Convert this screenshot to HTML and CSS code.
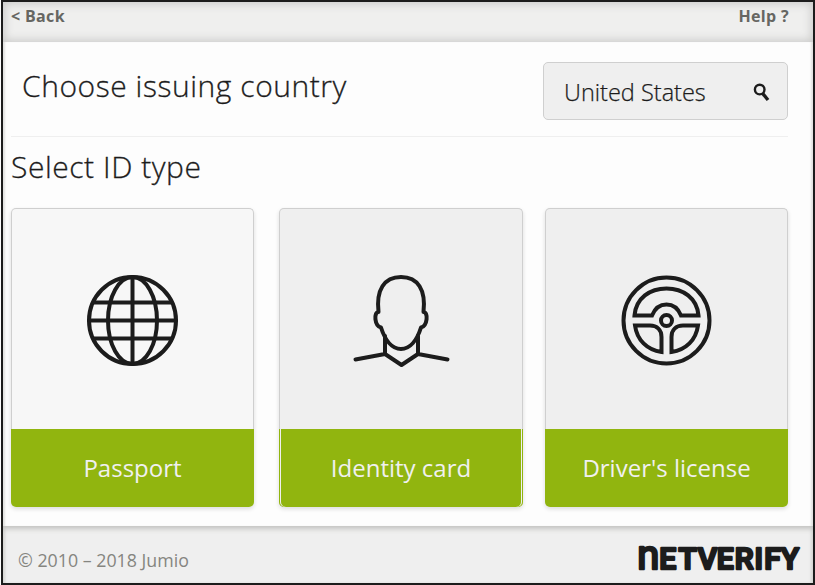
FILE: index.html
```html
<!DOCTYPE html>
<html lang="en">
<head>
<meta charset="utf-8">
<title>Netverify</title>
<link rel="stylesheet" href="styles.css">
</head>
<body>
<div class="window">
  <header class="topbar">
    <a class="back">&lt; Back</a>
    <a class="help">Help ?</a>
  </header>
  <main class="content">
    <section class="country">
      <h1 class="title">Choose issuing country</h1>
      <div class="select">
        <span class="select-value">United States</span>
        <svg class="search" viewBox="0 0 18 19" width="18" height="19">
          <circle cx="6.7" cy="6.6" r="4.8"/>
          <path d="M9.8 10.6 L15 17"/>
        </svg>
      </div>
    </section>
    <h2 class="subtitle">Select ID type</h2>
    <section class="cards">
      <div class="card card-light">
        <div class="picture">
          <svg class="icon" viewBox="0 0 126 120" width="126" height="120">
            <circle cx="62.5" cy="60.5" r="43.5"/>
            <ellipse cx="62.5" cy="60.5" rx="24.5" ry="43.5"/>
            <path d="M62.5 17V104M19 60.5H106M23.5 42.5H101.5M23.5 78.5H101.5"/>
          </svg>
        </div>
        <div class="label">Passport</div>
      </div>
      <div class="card">
        <div class="picture">
          <svg class="icon" viewBox="0 0 122 120" width="122" height="120">
            <path d="M38.5 52C36 30 44 17 61 17S86 30 83.5 52C88.5 52 87.5 66 81 67.5C77 80 70 89 61 89S45 80 41 67.5C34.5 66 33.5 52 38.5 52"/>
            <path d="M15.5 99.500L45 94L61.500 105L78 94L107.500 99.500M45 94V76M78 94V76"/>
          </svg>
        </div>
        <div class="label label-identity">Identity card</div>
      </div>
      <div class="card">
        <div class="picture">
          <svg class="icon icon-sharp" viewBox="0 0 134 120" width="134" height="120">
            <circle cx="66.5" cy="60.5" r="43"/>
            <circle cx="66.5" cy="60.5" r="5.5"/>
            <path d="M34.5 55.5C36 38 50 28.5 66.5 28.5S97 38 98.5 55.5H81C78 48 73 44.5 66.5 44.5S55 48 52 55.5Z"/>
            <path d="M35 65.5H50C57 65.5 61.5 70 61.5 77V92C47 90 37 80 35 65.5ZM98 65.5H83C76 65.5 71.5 70 71.5 77V92C86 90 96 80 98 65.5Z"/>
          </svg>
        </div>
        <div class="label">Driver's license</div>
      </div>
    </section>
  </main>
  <footer class="bottombar">
    <span class="copyright">© 2010 – 2018 Jumio</span>
    <svg class="logo" viewBox="0 0 170 36" width="170" height="36">
      <text y="27"><tspan class="logo-n" x="1.2">n</tspan><tspan x="23.3 42.5 61.7 80.8 98.7 118.5 128.2 144.8">ETVERIFY</tspan></text>
    </svg>
  </footer>
</div>
</body>
</html>
```
FILE: styles.css
```css
* { box-sizing: border-box; }
body {
  margin: 0;
  padding-left: 1px;
  background: #fdfdfd;
  font-family: "Open Sans", sans-serif;
  color: #1c1c1c;
}
.window {
  display: flex;
  flex-direction: column;
  width: 814px;
  height: 585px;
  border: 2px solid #1c1c1c;
  background: #fdfdfd;
}
.topbar {
  display: flex;
  justify-content: space-between;
  height: 40px;
  padding: 3px 24px 0 8px;
  background: #efefee;
  box-shadow: inset 0 0 9px 2px #cbcbca;
  font-size: 16px;
  line-height: 22px;
  font-weight: 700;
  letter-spacing: .35px;
  color: #666662;
}
.content {
  flex: 1;
  padding: 20px 25px 0 8px;
  box-shadow: inset 3px 0 2px -1px #e2e2e0, inset -3px 0 2px -1px #e2e2e0;
}
.country {
  display: flex;
  justify-content: space-between;
  height: 75px;
  padding-left: 11px;
  border-bottom: 1px solid #efefef;
}
.title, .subtitle {
  margin: 0;
  font-size: 30px;
  letter-spacing: .55px;
  line-height: 40px;
  font-weight: 300;
  -webkit-text-stroke: .3px #1c1c1c;
  white-space: nowrap;
}
.title { margin-top: 4px; }
.subtitle { margin-top: 10px; }
.select {
  display: flex;
  align-items: center;
  justify-content: space-between;
  width: 245px;
  height: 58px;
  padding: 0 16px 0 20px;
  border: 1px solid #cfcfcf;
  border-radius: 5px;
  background: #efefef;
  font-size: 23.5px;
  font-weight: 300;
  -webkit-text-stroke: .25px #1c1c1c;
}
.select-value { margin-top: 2px; white-space: nowrap; }
.search { margin-top: 2px; fill: none; stroke: #1c1c1c; stroke-width: 2.4; }
.search path { stroke-width: 3.4; }
.cards {
  display: grid;
  grid-template-columns: 243px 244px 243px;
  justify-content: start;
  margin-top: 21px;
}
.card {
  height: 299px;
  border-radius: 5px;
  box-shadow: 0 2px 4px #dcdcdc;
  background: #efefef;
}
.cards { grid-template-columns: 243px 25px 244px 22px 243px; }
.card:nth-child(2) { grid-column: 3; }
.card:nth-child(3) { grid-column: 5; }
.card-light { background: #f7f7f7; }
.picture {
  display: flex;
  justify-content: center;
  height: 221px;
  padding-top: 51px;
  border: 1px solid #cfcfcf;
  border-bottom: 0;
  border-radius: 5px 5px 0 0;
}
.icon { fill: none; stroke: #1c1c1c; stroke-width: 4; stroke-linejoin: round; stroke-linecap: round; }
.icon-sharp { stroke-linejoin: miter; }
.label {
  height: 78px;
  border-radius: 0 0 5px 5px;
  background: #91b50f;
  color: #f0f0f0;
  font-size: 24px;
  line-height: 78px;
  text-align: center;
  white-space: nowrap;
}
.label-identity { box-shadow: inset 1px 0 #91b50f, inset -1px 0 #91b50f, inset 2px 0 #efefef, inset -2px 0 #efefef; }
.bottombar {
  display: flex;
  justify-content: space-between;
  height: 57px;
  padding: 16px 7px 0 15px;
  background: #efefef;
  box-shadow: inset 0 5px 5px -2px #c4c4c2, inset 3px 0 3px -1px #d8d8d6, inset -3px 0 3px -1px #d8d8d6;
}
.copyright { font-size: 17.8px; line-height: 36px; color: #858580; white-space: nowrap; }
.logo { overflow: visible; fill: #1c1c1c; stroke: #1c1c1c; stroke-width: 2.5; stroke-linejoin: round; }
.logo text { font-family: "Roboto", sans-serif; font-size: 30px; font-weight: 500; }
.logo .logo-n { font-size: 40px; font-weight: 400; }
```
